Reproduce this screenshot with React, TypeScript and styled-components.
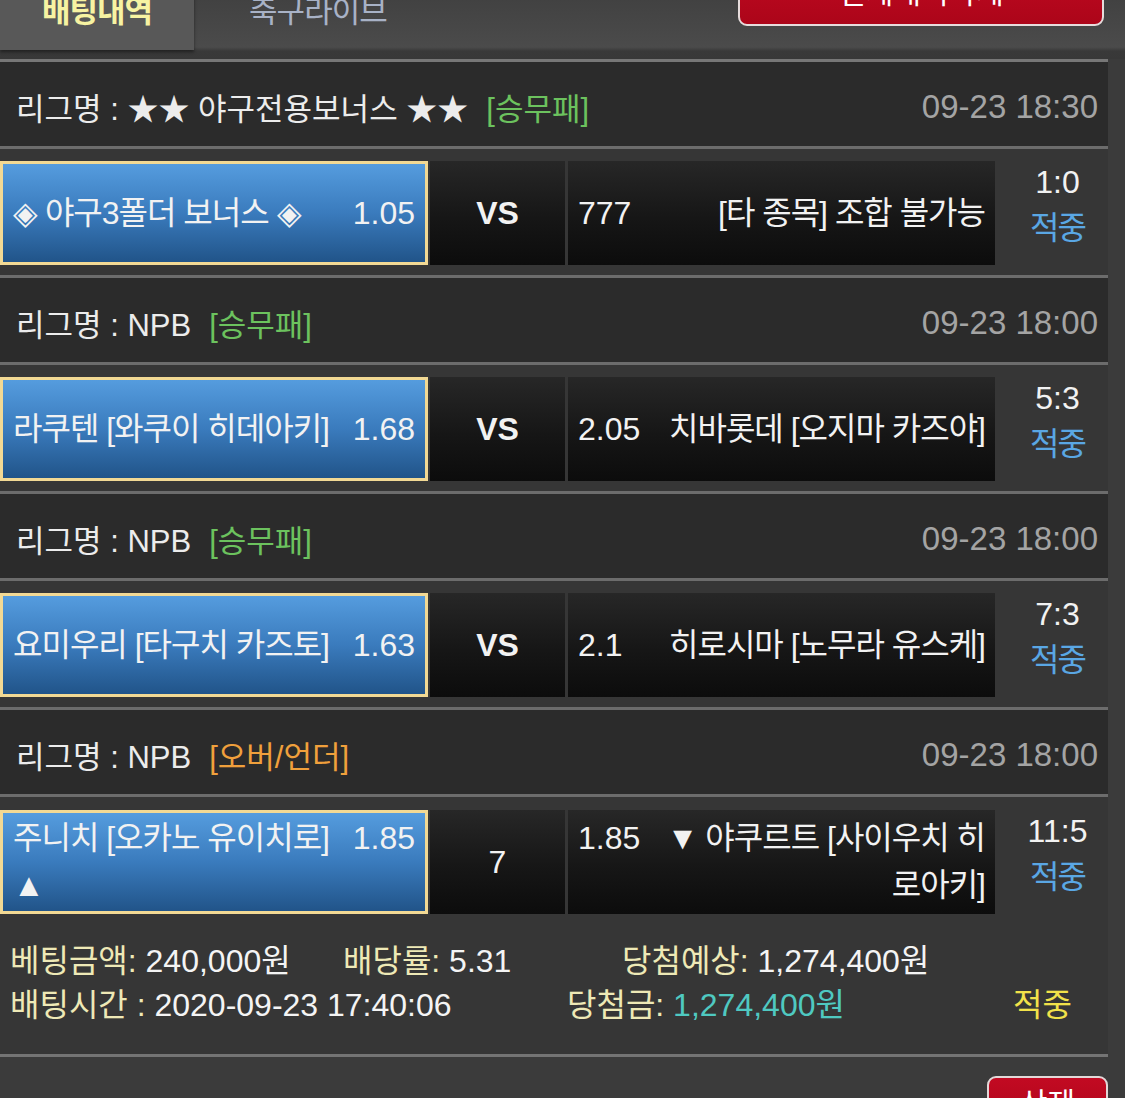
import styled, { createGlobalStyle } from "styled-components";

const GlobalStyle = createGlobalStyle`
  html, body {
    margin: 0;
    padding: 0;
    background: #3b3b3b;
    overflow: hidden;
  }
  body {
    font-family: "Liberation Sans", "Noto Sans CJK KR", sans-serif;
    color: #eeeeee;
  }
`;

const Page = styled.div`
  width: 1125px;
  height: 1098px;
  overflow: hidden;
  background: #3b3b3b;
`;

const TopBar = styled.div`
  margin-top: -40px;
  height: 99px;
  display: flex;
  align-items: flex-start;
  background: linear-gradient(to bottom, #3a3a3a 0%, #4b4b4b 88%, #393939 92%, #383838 100%);
`;

const Tab = styled.div<{ $active?: boolean }>`
  height: 90px;
  box-sizing: border-box;
  display: flex;
  align-items: flex-end;
  padding: 0 ${(p) => (p.$active ? "42px" : "0")} 18px;
  margin-left: ${(p) => (p.$active ? "0" : "55px")};
  font-size: 31px;
  line-height: 40px;
  letter-spacing: -1px;
  font-weight: ${(p) => (p.$active ? 700 : 400)};
  color: ${(p) => (p.$active ? "#f7f3a2" : "#a8b2c6")};
  background: ${(p) => (p.$active ? "#585858" : "transparent")};
  box-shadow: ${(p) => (p.$active ? "0 2px 3px rgba(0,0,0,0.45)" : "none")};
`;

const ClearAllButton = styled.button`
  margin-left: auto;
  margin-right: 21px;
  width: 366px;
  height: 66px;
  box-sizing: border-box;
  border: 2px solid #e6dcdc;
  border-radius: 9px;
  background: linear-gradient(to bottom, #c20a22, #ac0519);
  color: #ffffff;
  font-family: inherit;
  font-size: 30px;
  line-height: 40px;
`;

const List = styled.div`
  width: 1108px;
  border-top: 3px solid #777777;
`;

const LeagueHeader = styled.div`
  height: 87px;
  box-sizing: border-box;
  display: flex;
  align-items: center;
  justify-content: space-between;
  padding: 5px 10px 0 16px;
  background: #2b2b2b;
  border-bottom: 3px solid #6c6c6c;
  font-size: 31px;
`;

const LeagueName = styled.span`
  color: #ececec;
`;

const Tag = styled.span<{ $tone: "green" | "orange" }>`
  margin-left: 18px;
  color: ${(p) => (p.$tone === "green" ? "#6cc25e" : "#f0a03c")};
`;

const DateText = styled.span`
  font-size: 33px;
  color: #a4a4a4;
`;

const MatchRow = styled.div<{ $last?: boolean }>`
  display: flex;
  align-items: stretch;
  padding: ${(p) => (p.$last ? "13px 0 0" : "12px 0 10px")};
  background: #363636;
  border-bottom: ${(p) => (p.$last ? "none" : "3px solid #6c6c6c")};
  font-size: 32px;
  line-height: 47px;
  color: #f2f2f2;
`;

const HomeCell = styled.div`
  width: 428px;
  height: 104px;
  box-sizing: border-box;
  display: flex;
  align-items: center;
  padding: 0 10px;
  border: 3px solid #f2d994;
  background: linear-gradient(to bottom, #559cde 0%, #3a7bbd 50%, #215489 100%);
`;

const DarkCell = styled.div<{ $width: number }>`
  width: ${(p) => p.$width}px;
  height: 104px;
  box-sizing: border-box;
  display: flex;
  align-items: center;
  background: linear-gradient(to bottom, #272727 0%, #161616 55%, #0c0c0c 100%);
`;

const MidCell = styled(DarkCell)<{ $bold?: boolean }>`
  margin-left: 2px;
  justify-content: center;
  font-weight: ${(p) => (p.$bold ? 700 : 400)};
`;

const AwayCell = styled(DarkCell)`
  margin-left: 3px;
  padding: 0 10px;
`;

const CellLine = styled.div`
  flex: 1;
  display: flex;
  align-items: baseline;
`;

const TeamName = styled.span<{ $right?: boolean }>`
  flex: 1;
  letter-spacing: -1px;
  text-align: ${(p) => (p.$right ? "right" : "left")};
  margin-left: ${(p) => (p.$right ? "24px" : "0")};
  margin-right: ${(p) => (p.$right ? "0" : "8px")};
`;

const Odds = styled.span`
  flex-shrink: 0;
`;

const ScoreCell = styled.div`
  width: 113px;
  height: 104px;
  box-sizing: border-box;
  padding: 0 0 16px 12px;
  display: flex;
  flex-direction: column;
  align-items: center;
  justify-content: center;
  line-height: 46px;
`;

const Score = styled.span`
  color: #f2f2f2;
`;

const Result = styled.span`
  color: #5aa7e4;
  letter-spacing: -2px;
`;

const Summary = styled.div`
  padding: 25px 0 27px 10px;
  background: #363636;
  border-bottom: 3px solid #747474;
  font-size: 32px;
  line-height: 44px;
`;

const SummaryRow = styled.div<{ $cols: string }>`
  display: grid;
  grid-template-columns: ${(p) => p.$cols};
  white-space: nowrap;
`;

const Label = styled.span`
  color: #eee9b6;
`;

const Value = styled.span<{ $color?: string }>`
  color: ${(p) => p.$color ?? "#f4f4f4"};
`;

const Footer = styled.div`
  width: 1108px;
  display: flex;
  justify-content: flex-end;
  padding-top: 19px;
`;

const DeleteButton = styled.button`
  width: 121px;
  height: 56px;
  box-sizing: border-box;
  border: 2px solid #e2d8d8;
  border-radius: 9px;
  background: linear-gradient(to bottom, #c20a22, #ac0519);
  color: #ffffff;
  font-family: inherit;
  font-size: 30px;
  line-height: 40px;
`;

type Match = {
  league: string;
  tag: string;
  tone: "green" | "orange";
  time: string;
  home: string;
  homeOdds: string;
  mid: string;
  awayOdds: string;
  away: string;
  score: string;
};

const matches: Match[] = [
  {
    league: "★★ 야구전용보너스 ★★",
    tag: "[승무패]",
    tone: "green",
    time: "09-23 18:30",
    home: "◈ 야구3폴더 보너스 ◈",
    homeOdds: "1.05",
    mid: "VS",
    awayOdds: "777",
    away: "[타 종목] 조합 불가능",
    score: "1:0",
  },
  {
    league: "NPB",
    tag: "[승무패]",
    tone: "green",
    time: "09-23 18:00",
    home: "라쿠텐 [와쿠이 히데아키]",
    homeOdds: "1.68",
    mid: "VS",
    awayOdds: "2.05",
    away: "치바롯데 [오지마 카즈야]",
    score: "5:3",
  },
  {
    league: "NPB",
    tag: "[승무패]",
    tone: "green",
    time: "09-23 18:00",
    home: "요미우리 [타구치 카즈토]",
    homeOdds: "1.63",
    mid: "VS",
    awayOdds: "2.1",
    away: "히로시마 [노무라 유스케]",
    score: "7:3",
  },
  {
    league: "NPB",
    tag: "[오버/언더]",
    tone: "orange",
    time: "09-23 18:00",
    home: "주니치 [오카노 유이치로] ▲",
    homeOdds: "1.85",
    mid: "7",
    awayOdds: "1.85",
    away: "▼ 야쿠르트 [사이우치 히로아키]",
    score: "11:5",
  },
];

export default function App() {
  return (
    <Page>
      <GlobalStyle />
      <TopBar>
        <Tab $active>배팅내역</Tab>
        <Tab>축구라이브</Tab>
        <ClearAllButton>전체내역삭제</ClearAllButton>
      </TopBar>
      <List>
        {matches.map((m, i) => {
          const last = i === matches.length - 1;
          return (
            <div key={i}>
              <LeagueHeader>
                <span>
                  <LeagueName>리그명 : {m.league}</LeagueName>
                  <Tag $tone={m.tone}>{m.tag}</Tag>
                </span>
                <DateText>{m.time}</DateText>
              </LeagueHeader>
              <MatchRow $last={last}>
                <HomeCell>
                  <CellLine>
                    <TeamName>{m.home}</TeamName>
                    <Odds>{m.homeOdds}</Odds>
                  </CellLine>
                </HomeCell>
                <MidCell $width={135} $bold={m.mid === "VS"}>
                  {m.mid}
                </MidCell>
                <AwayCell $width={427}>
                  <CellLine>
                    <Odds>{m.awayOdds}</Odds>
                    <TeamName $right>{m.away}</TeamName>
                  </CellLine>
                </AwayCell>
                <ScoreCell>
                  <Score>{m.score}</Score>
                  <Result>적중</Result>
                </ScoreCell>
              </MatchRow>
            </div>
          );
        })}
        <Summary>
          <SummaryRow $cols="333px 279px 1fr">
            <span>
              <Label>베팅금액: </Label>
              <Value>240,000원</Value>
            </span>
            <span>
              <Label>배당률: </Label>
              <Value>5.31</Value>
            </span>
            <span>
              <Label>당첨예상: </Label>
              <Value>1,274,400원</Value>
            </span>
          </SummaryRow>
          <SummaryRow $cols="557px 446px 1fr">
            <span>
              <Label>배팅시간 : </Label>
              <Value>2020-09-23 17:40:06</Value>
            </span>
            <span>
              <Label>당첨금: </Label>
              <Value $color="#4fc9c1">1,274,400원</Value>
            </span>
            <Value $color="#f2e24a">적중</Value>
          </SummaryRow>
        </Summary>
      </List>
      <Footer>
        <DeleteButton>삭제</DeleteButton>
      </Footer>
    </Page>
  );
}
